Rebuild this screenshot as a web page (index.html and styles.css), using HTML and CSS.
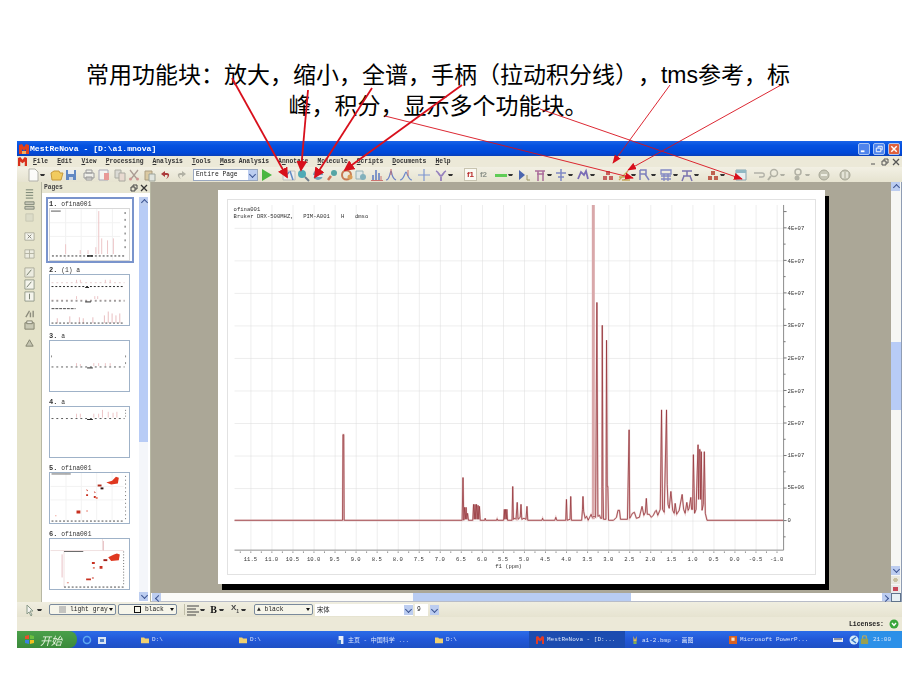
FILE: index.html
```html
<!DOCTYPE html>
<html lang="zh">
<head>
  <meta charset="UTF-8">
  <title>MestReNova 常用功能块</title>
  <link rel="stylesheet" href="styles.css">
</head>
<body>

  <h1 class="heading">常用功能块：放大，缩小，全谱，手柄（拉动积分线），tms参考，标峰，积分，显示多个功能块。</h1>

  <div class="app">
    <div class="titlebar">
      <svg class="logo" viewBox="0 0 12 12"><path d="M1 11V2l3-1 2 3 2-3 3 1v9H8V6L6 8 4 6v5z" fill="#e0401c"/><path d="M4 11V8h4v3z" fill="#f0b060"/></svg>
      <span class="title-text">MestReNova - [D:\a1.mnova]</span>
      <div class="winbtns">
        <span class="winbtn"><svg viewBox="0 0 11 11"><path d="M2 8h4" stroke="#fff" stroke-width="2"/></svg></span>
        <span class="winbtn"><svg viewBox="0 0 11 11"><path d="M2.5 4.5h5v4h-5zM4.5 4V2.5h4.500v4H8" fill="none" stroke="#fff"/></svg></span>
        <span class="winbtn close"><svg viewBox="0 0 11 11"><path d="M2.500 2.500l6 6M8.500 2.500l-6 6" stroke="#fff" stroke-width="1.600"/></svg></span>
      </div>
    </div>

    <div class="menubar">
      <svg class="menu-logo" viewBox="0 0 10 10"><path d="M0 10V1l2.500-1L5 3l2.500-3L10 1v9H7.500V5L5 7 2.500 5v5z" fill="#d8301c"/></svg>
      <div class="menu-items">
        <span><u>F</u>ile</span><span><u>E</u>dit</span><span><u>V</u>iew</span><span><u>P</u>rocessing</span><span><u>A</u>nalysis</span><span><u>T</u>ools</span><span><u>M</u>ass Analysis</span><span>A<u>n</u>notate</span><span><u>M</u>olecule</span><span><u>S</u>cripts</span><span><u>D</u>ocuments</span><span><u>H</u>elp</span>
      </div>
      <div class="mdibtns">
        <svg viewBox="0 0 8 8"><path d="M1 6h4" stroke="#555"/></svg>
        <svg viewBox="0 0 8 8"><path d="M1 3h4v4H1zM3 3V1h4v4H5" fill="none" stroke="#555"/></svg>
        <svg viewBox="0 0 8 8"><path d="M1 1l6 6M7 1L1 7" stroke="#555" stroke-width="1.300"/></svg>
      </div>
    </div>

    <div class="toolbar">
      <svg class="ic" viewBox="0 0 14 14"><path d="M3 1h6l3 3v9H3z" fill="#fff" stroke="#a8a8a0"/></svg><i class="dd"></i>
      <svg class="ic g5" viewBox="0 0 14 14"><path d="M1 5l3-2h5l1 2h3l-2 7H2z" fill="#f3c64a" stroke="#c08c20"/></svg>
      <svg class="ic" viewBox="0 0 14 14"><path d="M2 2h10v10H2z" fill="#4a78c0"/><path d="M4 2h6v4H4z" fill="#e8eef8"/><path d="M5 9h4v3H5z" fill="#c8d4e8"/></svg>
      <svg class="ic g4" viewBox="0 0 14 14"><path d="M4 2h6v3H4zM2 5h10v5H2zM4 9h6v3H4z" fill="#f0f0ec" stroke="#8c8c90"/></svg>
      <svg class="ic g1" viewBox="0 0 14 14"><path d="M2 2h9v10H2z" fill="#f6f6f4" stroke="#9a9ab0"/><path d="M7 5h5v7H7z" fill="#e88c8c"/></svg>
      <svg class="ic g2" viewBox="0 0 14 14"><path d="M2 2h6v8H2z" fill="#d8d8d4" stroke="#a0a098"/><path d="M6 5h6v8H6z" fill="#e8d8d0" stroke="#a0a098"/></svg>
      <svg class="ic" viewBox="0 0 14 14"><path d="M3 2l7 9M11 2l-7 9" stroke="#a09088" stroke-width="1.300"/><circle cx="3.500" cy="11" r="1.500" fill="#c88"/><circle cx="10.500" cy="11" r="1.500" fill="#c88"/></svg>
      <svg class="ic g2" viewBox="0 0 14 14"><path d="M2 3h7v9H2z" fill="#d8c498" stroke="#a09070"/><path d="M6 6h6v7H6z" fill="#dfe4e0" stroke="#909890"/></svg>
      <svg class="ic g2" viewBox="0 0 14 14"><path d="M7 11c4-2 4-6 1-6H6V3L2 6l4 3V7h2c1 0 1 2-1 4z" fill="#a01c20"/></svg>
      <svg class="ic g1" viewBox="0 0 14 14"><path d="M7 11c-4-2-4-6-1-6h2V3l4 3-4 3V7H6c-1 0-1 2 1 4z" fill="#a8a89c"/></svg>
      <div class="combo view-combo g5"><span>Entire Page</span><i class="combo-arrow"></i></div>
      <svg class="ic g2" viewBox="0 0 14 14"><path d="M2 1l10 6-10 6z" fill="#2fae28"/></svg>
      <svg class="ic g8" viewBox="0 0 14 14"><path d="M1 3h12v9H1z" fill="#f0f0f0" stroke="#b8b8b8"/><path d="M8 3l3 9M4 8l3-4" stroke="#4a7ac0" stroke-width="1.500"/></svg>
      <svg class="ic" viewBox="0 0 14 14"><circle cx="6" cy="6" r="4" fill="#34a0b0"/><path d="M9 9l4 4" stroke="#5a6a80" stroke-width="2"/></svg>
      <svg class="ic g1" viewBox="0 0 14 14"><circle cx="7" cy="7" r="5" fill="#5a9ab8"/><path d="M1 8h12" stroke="#e0e8f0" stroke-width="2"/></svg>
      <svg class="ic" viewBox="0 0 14 14"><circle cx="9" cy="5" r="3" fill="#3c9a9c"/><path d="M6 8l-3 4" stroke="#c86040" stroke-width="2.500"/></svg>
      <svg class="ic g1" viewBox="0 0 14 14"><circle cx="6.500" cy="7" r="4.500" fill="none" stroke="#c0683c" stroke-width="2"/><circle cx="10" cy="9" r="2.500" fill="#d89040"/></svg>
      <svg class="ic" viewBox="0 0 14 14"><path d="M2 3h7v8H2z" fill="#dfe8e8" stroke="#88a8b0"/><circle cx="9" cy="9" r="3" fill="#70a8b8"/></svg>
      <svg class="ic g2" viewBox="0 0 14 14"><path d="M3 12V7M6 12V2M9 12V5" stroke="#4468c0" stroke-width="1.500"/><path d="M11 12V8M1 12.500h12" stroke="#c86060"/></svg>
      <svg class="ic" viewBox="0 0 14 14"><path d="M2 12c4 0 4-9 5-9s0 7 5 9" fill="none" stroke="#5870c0" stroke-width="1.200"/><path d="M7 1v6" stroke="#c05050"/></svg>
      <svg class="ic g1" viewBox="0 0 14 14"><path d="M1 12c4 0 5-8 6-8s2 8 6 8" fill="none" stroke="#5878c8" stroke-width="1.200"/><path d="M9 2v6" stroke="#c06060"/></svg>
      <svg class="ic g4" viewBox="0 0 14 14"><path d="M7 1v12M1 7h12" stroke="#6a88d0" stroke-width="1.200"/></svg>
      <svg class="ic g3" viewBox="0 0 14 14"><path d="M2 3c3 1 3 5 5 5s2-4 5-5M7 8v5" fill="none" stroke="#8870b8" stroke-width="1.800"/></svg><i class="dd"></i>
      <span class="fbtn g11 active">f1</span><span class="fbtn">f2</span>
      <svg class="ic g4" viewBox="0 0 14 14"><path d="M1 6h12v3H1z" fill="#48c840"/></svg><i class="dd"></i>
      <svg class="ic g4" viewBox="0 0 14 14"><path d="M2 2v10l6-5z" fill="#3050a8"/><path d="M10 7v5h3" stroke="#908850" fill="none"/></svg>
      <svg class="ic g2" viewBox="0 0 14 14"><path d="M2 3h10M4 6h7M5 3v10M10 3v10" stroke="#a05890" stroke-width="1.500"/></svg><i class="dd"></i>
      <svg class="ic g2" viewBox="0 0 14 14"><path d="M2 5h10M7 1v12M4 9h6" stroke="#6c78c0" stroke-width="1.500"/></svg><i class="dd"></i>
      <svg class="ic g3" viewBox="0 0 14 14"><path d="M2 11l3-7 3 3 2-4 2 8" fill="none" stroke="#6858b0" stroke-width="1.800"/></svg><i class="dd"></i>
      <svg class="ic g6" viewBox="0 0 14 14"><path d="M5 3h4v4H5zM2 8h4v4H2zM8 8h4v4H8z" fill="#c04848"/></svg>
      <svg class="ic g2" viewBox="0 0 14 14"><path d="M2 12l9-9M2 9h8M5 12h8" stroke="#c0a048" stroke-width="1.300"/></svg><i class="dd"></i>
      <svg class="ic g1" viewBox="0 0 14 14"><path d="M3 2v10M3 2h6v4H3M8 6l4 6" fill="none" stroke="#6c70b8" stroke-width="1.500"/></svg><i class="dd"></i>
      <svg class="ic g3" viewBox="0 0 14 14"><path d="M2 2h10v4H2zM2 8h10M2 11h10M5 6v7M9 6v7" fill="none" stroke="#7078c0" stroke-width="1.300"/></svg><i class="dd"></i>
      <svg class="ic g2" viewBox="0 0 14 14"><path d="M2 3h10M7 3v5M3 8h8M4 8l-2 5M10 8l2 5" fill="none" stroke="#6860a8" stroke-width="1.500"/></svg><i class="dd"></i>
      <svg class="ic g7" viewBox="0 0 14 14"><path d="M5 3h4v4H5zM2 8h4v4H2zM8 8h4v4H8z" fill="#b84838"/></svg><i class="dd"></i>
      <svg class="ic g9" viewBox="0 0 14 14"><path d="M2 2h10v10H2z" fill="#e8f0f4" stroke="#7898a8"/><path d="M2 2h10v3H2z" fill="#80b0c0"/></svg>
      <svg class="ic g4" viewBox="0 0 14 14"><path d="M2 5h8c3 0 3 4 0 4H7" fill="none" stroke="#a8a8a0" stroke-width="1.300"/></svg>
      <svg class="ic" viewBox="0 0 14 14"><circle cx="8" cy="5" r="3.500" fill="none" stroke="#a8a89c" stroke-width="1.500"/><path d="M5 8l-3 4" stroke="#a8a89c" stroke-width="2"/></svg><i class="dd dim"></i>
      <svg class="ic g6" viewBox="0 0 14 14"><circle cx="7" cy="4" r="3" fill="none" stroke="#a8a89c" stroke-width="1.500"/><circle cx="6" cy="10" r="2.500" fill="#a8a89c"/></svg><i class="dd dim"></i>
      <svg class="ic g7" viewBox="0 0 14 14"><circle cx="7" cy="7" r="5" fill="#c0c0b0" stroke="#989888"/><path d="M4 6h6v2H4z" fill="#eeeee4"/></svg>
      <svg class="ic g7" viewBox="0 0 14 14"><circle cx="7" cy="7" r="5" fill="#c0c0b0" stroke="#989888"/><path d="M5 4v6M9 4v6" stroke="#eeeee4" stroke-width="1.500"/></svg>
    </div>

    <div class="workspace">
      <div class="strip">
        <svg class="strip-ic" viewBox="0 0 12 12"><path d="M2 2h8M2 5h8M2 8h8M2 11h8" stroke="#6e7c6c"/></svg>
        <svg class="strip-ic" viewBox="0 0 12 12"><path d="M1 2h10v3H1zM1 7h10v3H1z" fill="#c8c8b8" stroke="#808878"/></svg>
        <svg class="strip-ic" viewBox="0 0 12 12"><path d="M2 2h8v8H2z" fill="#dcdcc8" stroke="#c8c8b4"/></svg>
        <svg class="strip-ic gap-big" viewBox="0 0 12 12"><path d="M1 2h10v8H1z" fill="#f4f4ec" stroke="#a8a898"/><path d="M4 4l4 4M8 4l-4 4" stroke="#808078"/></svg>
        <svg class="strip-ic gap-mid" viewBox="0 0 12 12"><path d="M1 2h10v9H1zM1 6h10M6 2v9" fill="#ecece0" stroke="#b0b0a0"/></svg>
        <svg class="strip-ic gap-big" viewBox="0 0 12 12"><path d="M1 1h10v10H1z" fill="#ecece0" stroke="#a8a898"/><path d="M3 9l5-6" stroke="#707868"/></svg>
        <svg class="strip-ic" viewBox="0 0 12 12"><path d="M1 1h10v10H1z" fill="#f4f4ec" stroke="#909888"/><path d="M3 9l5-6" stroke="#707868"/></svg>
        <svg class="strip-ic" viewBox="0 0 12 12"><path d="M1 1h10v10H1z" fill="#f4f4ec" stroke="#909888"/><path d="M6 3v6" stroke="#707868"/></svg>
        <svg class="strip-ic gap-mid" viewBox="0 0 12 12"><path d="M2 10l4-7M7 10V5M10 10V3" stroke="#8c8c7c" stroke-width="1.500"/></svg>
        <svg class="strip-ic" viewBox="0 0 12 12"><path d="M1 3h10v7H1z" fill="#c8c8b4" stroke="#80806c"/><path d="M3 1h6v3H3z" fill="#e8e8dc" stroke="#80806c"/></svg>
        <svg class="strip-ic gap-mid" viewBox="0 0 12 12"><path d="M2 10l4-7 4 7z" fill="#c4c4b0" stroke="#80806c"/></svg>
      </div>

      <div class="pages">
        <div class="pages-head">
          <span>Pages</span>
          <svg viewBox="0 0 8 8"><path d="M1 3h4v4H1zM3 3V1h4v4H5" fill="none" stroke="#444"/></svg>
          <svg viewBox="0 0 8 8"><path d="M1 1l6 6M7 1L1 7" stroke="#333" stroke-width="1.300"/></svg>
        </div>
        <div class="pages-body">
          <div class="page-list">
            <div class="pg selected">
              <div class="pg-label"><b>1.</b> ofina001</div>
              <svg class="thumb tall" viewBox="0 0 81 52"><path d="M16 0v52M32 0v52M48 0v52M64 0v52M0 14h72M0 28h72" stroke="#f2f2f2" fill="none"/><path d="M1 2h10" stroke="#555"/><path d="M16 46V36M31 46v-4M39 46v-4M50 46V2M53 46V30M59 46V32M65 46V30M47 46v-7" stroke="#ecc4c6" fill="none"/><path d="M2 48h76" stroke="#333" stroke-dasharray="2 2"/><path d="M38 48h6" stroke="#222" stroke-width="1.500"/><path d="M77 3v42" stroke="#555" stroke-dasharray="2 5"/></svg>
            </div>
            <div class="pg">
              <div class="pg-label"><b>2.</b> (1) a</div>
              <svg class="thumb" viewBox="0 0 81 52"><path d="M1 8h76M1 26h76" stroke="#e4cccc" stroke-dasharray="2 3"/><path d="M27 8V5M31 8V5M57 8V5M62 8V5M27 25v-3M46 25v-3M49 25v-3" stroke="#ecc4c6"/><path d="M1 12h76" stroke="#222" stroke-dasharray="2 2"/><path d="M1 27h76" stroke="#555" stroke-dasharray="2 3"/><path d="M36 28h6M36 13h4" stroke="#222"/><path d="M1 35h25" stroke="#444" stroke-dasharray="3 1"/><path d="M7 50v-5M20 50v-7M30 50v-6M34 50v-5M44 50v-6M56 50v-8M60 50v-12M64 50v-10M68 50v-8M72 50v-10" stroke="#e8bcbe"/><path d="M1 50h76" stroke="#444" stroke-dasharray="2 2"/></svg>
            </div>
            <div class="pg">
              <div class="pg-label"><b>3.</b> a</div>
              <svg class="thumb" viewBox="0 0 81 52"><path d="M1 27h76" stroke="#555" stroke-dasharray="2 3"/><path d="M38 28h6" stroke="#222"/><path d="M27 26v-3M31 26v-2M45 26v-3M50 26v-3M57 26v-3M62 26v-3" stroke="#ecc4c6"/><path d="M1 15v2M78 15v2M78 22v2" stroke="#888"/></svg>
            </div>
            <div class="pg">
              <div class="pg-label"><b>4.</b> a</div>
              <svg class="thumb" viewBox="0 0 81 52"><path d="M1 12h76" stroke="#555" stroke-dasharray="2 3"/><path d="M38 13h6" stroke="#222"/><path d="M27 11V7M31 11V7M45 11V7M50 11V7M54 11V3M60 11V5M65 11V6M69 11V5" stroke="#ecc4c6"/><path d="M78 3v7" stroke="#777" stroke-dasharray="1 2"/></svg>
            </div>
            <div class="pg">
              <div class="pg-label"><b>5.</b> ofina001</div>
              <svg class="thumb" viewBox="0 0 81 52"><path d="M16 0v50M32 0v50M48 0v50M64 0v50M0 14h76M0 28h76" stroke="#f2f2f2" fill="none"/><path d="M1 1h20" stroke="#666"/><path d="M58 10l6-2 4-4 3 1-1 6-7 1z" fill="#e03820"/><path d="M49 12h4v2h-4z" fill="#b02818"/><path d="M52 15h3v2h-3z" fill="#301010"/><path d="M27 39h4v3h-4zM45 19l2 1-1 1zM45 24h2v2h-2zM37 17l2 1-1 1zM37 22h2v2h-2z" fill="#c83020"/><path d="M37 39h2v1h-2zM5 44h1v1H5zM47 25h2v2h-2z" fill="#e88070"/><path d="M1 50h76" stroke="#444" stroke-dasharray="2 2"/><path d="M78 3v46" stroke="#666" stroke-dasharray="1 3"/></svg>
            </div>
            <div class="pg">
              <div class="pg-label"><b>6.</b> ofina001</div>
              <svg class="thumb" viewBox="0 0 81 52"><path d="M14 12v38M0 12h76M54 0v12" stroke="#f0e0e0" fill="none"/><path d="M55 12V2M12 40V16" stroke="#e8c0c4"/><path d="M14 13h20" stroke="#666"/><path d="M60 19l6-3 3-1 3 1-1 6-8 1z" fill="#e03820"/><path d="M55 21h4v2h-4z" fill="#a02018"/><path d="M43 24h3v2h-3zM51 28h3v3h-3zM37 41h5v2h-5zM43 40h2v1h-2z" fill="#c83020"/><path d="M44 29h2v2h-2zM17 45h2v1h-2z" fill="#e08878"/><path d="M14 50h64" stroke="#444" stroke-dasharray="2 2"/><path d="M76 13v36" stroke="#666" stroke-dasharray="1 2"/></svg>
            </div>
          </div>
          <div class="side-scroll">
            <i class="sbtn up"></i>
            <i class="side-thumb"></i>
            <i class="side-track"></i>
            <i class="sbtn down"></i>
          </div>
        </div>
      </div>

      <div class="viewer">
        <div class="canvas">
          <div class="page-sheet">
            <div class="plot-frame">
              <svg class="plot" viewBox="227 199 589 376">
                <defs>
                  <pattern id="grid" patternUnits="userSpaceOnUse" x="249" y="227" width="21.160" height="32.700">
                    <path d="M0 0V32.700M0 0H21.160" stroke="#dcdcdc" fill="none"/>
                  </pattern>
                  <path id="spectrum" d="M233 521H341.600L342 435L342.800 435L343.200 521H461.800L462.700 478L463.500 521L464.300 508L465 520L465.800 508L466.500 520L467.300 514L468.200 521H472.500L473.300 505L474 520L474.800 505L475.500 520L476.300 505L477 520L477.800 506L478.500 520L479.200 507L480 521H484.500L485 519L485.500 521H496.500L497 519.500L497.500 521H503.500L504.200 510L504.800 520L505.500 510L506.200 520L506.800 510L507.500 521H512L512.700 487L513.400 520L515 519L516 520L517.200 503L518 520L520.200 518L521 505L521.800 520L524 519L526 520L527 507L527.800 521H542L542.700 519L543.400 521H555L556 518L557 521H566L566.700 500L567.400 521L570.300 520L571 497L571.700 521H582L582.800 510L583.300 497L584 512L585.500 519L587 517L588.500 521L590 518L591.500 515L592.500 518L594.500 517L596 518L597.300 302L598.300 517L600 516L601 519L602.300 519L602.700 325L603.400 487L604 520L606.400 520L607 340L607.700 487L608.300 487L609 521H614L617 518L618.500 511L620 511L621 520L628 520L629.700 430L630.300 519L632 516L633 514L635 513L637 519L640 518L642.700 507L644.500 516L646 513L647 499L648 515L650 515L652 518L654 516L656 512L657 511L658.500 516L661 510L662.300 410L663.300 510L665 513L667.300 410L668 485L668.800 505L670 509L671.700 492L673.500 511L675 514L676 504L677.500 515L680 511L683 495L684.500 510L686 514L687.700 503L689 511L690 509L691.700 498L692.500 510L693.500 510L694.300 455L695.500 514L697 510L699 445L699.600 500L700.300 450L701 450L701.600 500L702.300 452L703 511L704.300 505L705.300 452L706.300 514L708 521H785"/>
                </defs>
                <rect x="233" y="204" width="552" height="347" fill="url(#grid)"/>
                <text class="plot-text" x="232" y="210">ofina001</text>
                <text class="plot-text" x="232" y="217">Bruker DRX-500MHZ,<tspan x="302">PIM-A001</tspan><tspan x="340">H</tspan><tspan x="354">dmso</tspan></text>

                <path d="M593.700 204V520" stroke="#d9a8aa" stroke-width="3"/>
                <use href="#spectrum" class="spectrum-halo"/>
                <use href="#spectrum" class="spectrum-core"/>

                <path d="M233 551H785M785 204V551" stroke="#8c8c8c" fill="none"/>
                <path d="M233 553H785" stroke="#555" stroke-dasharray="1 9.580" stroke-dashoffset="-5.300"/>
                <path d="M785 210.650H788M785 227H788M785 243.350H787M785 259.700H788M785 276.050H787M785 292.400H788M785 308.750H787M785 325.100H788M785 341.450H787M785 357.800H788M785 374.150H787M785 390.500H788M785 406.850H787M785 423.200H788M785 439.550H787M785 455.900H788M785 472.250H787M785 488.600H788M785 504.950H787M785 521.300H788M785 537.650H787" stroke="#777"/>

                <text class="plot-text" x="789" y="229">4E+07</text>
                <text class="plot-text" x="789" y="262">4E+07</text>
                <text class="plot-text" x="789" y="295">4E+07</text>
                <text class="plot-text" x="789" y="327">3E+07</text>
                <text class="plot-text" x="789" y="360">2E+07</text>
                <text class="plot-text" x="789" y="393">2E+07</text>
                <text class="plot-text" x="789" y="425">2E+07</text>
                <text class="plot-text" x="789" y="457">1E+07</text>
                <text class="plot-text" x="789" y="490">5E+06</text>
                <text class="plot-text" x="789" y="523">0</text>

                <g class="x-labels">
                  <text x="249" y="562">11.5</text><text x="270.200" y="562">11.0</text><text x="291.300" y="562">10.5</text><text x="312.500" y="562">10.0</text><text x="333.600" y="562">9.5</text><text x="354.800" y="562">9.0</text><text x="376" y="562">8.5</text><text x="397.100" y="562">8.0</text><text x="418.300" y="562">7.5</text><text x="439.400" y="562">7.0</text><text x="460.600" y="562">6.5</text><text x="481.800" y="562">6.0</text><text x="502.900" y="562">5.5</text><text x="524.100" y="562">5.0</text><text x="545.200" y="562">4.5</text><text x="566.400" y="562">4.0</text><text x="587.600" y="562">3.5</text><text x="608.700" y="562">3.0</text><text x="629.900" y="562">2.5</text><text x="651" y="562">2.0</text><text x="672.200" y="562">1.5</text><text x="693.400" y="562">1.0</text><text x="714.500" y="562">0.5</text><text x="735.700" y="562">0.0</text><text x="756.800" y="562">-0.5</text><text x="778" y="562">-1.0</text>
                </g>
                <text class="plot-text" x="495" y="569">f1 (ppm)</text>
              </svg>
            </div>
          </div>
        </div>
        <div class="hscroll">
          <i class="sbtn left"></i>
          <i class="h-track"></i>
          <i class="h-thumb"></i>
          <i class="h-rest"></i>
          <i class="sbtn right"></i>
        </div>
      </div>

      <div class="vscroll">
        <i class="sbtn up"></i>
        <i class="v-track top"></i>
        <i class="v-thumb"></i>
        <i class="v-track bottom"></i>
        <i class="sbtn down"></i>
        <i class="v-mini dot"></i>
        <i class="v-mini pink"></i>
        <i class="v-corner"></i>
      </div>
    </div>

    <div class="formatbar">
      <svg class="ic" viewBox="0 0 14 14"><path d="M4 2v9l2-2 2 4 1-1-2-4h3z" fill="#f4f4f0" stroke="#8a9a88"/></svg><i class="dd"></i>
      <div class="combo fmt-combo fill-combo"><i class="swatch gray"></i><span>light gray</span><i class="caret"></i></div>
      <div class="combo fmt-combo line-combo"><i class="swatch box"></i><span>black</span><i class="caret"></i></div>
      <i class="sep"></i>
      <svg class="ic" viewBox="0 0 14 14"><path d="M1 3h12M1 6h9M1 9h12M1 12h9" stroke="#444" stroke-width="1.200"/></svg><i class="dd"></i>
      <b class="bold-btn">B</b><i class="dd"></i>
      <span class="sub-btn">X<sub>1</sub></span><i class="dd"></i>
      <div class="combo fmt-combo text-combo"><span>&#9650; black</span><i class="caret"></i></div>
      <div class="combo font-combo"><span>宋体</span><i class="combo-arrow"></i></div>
      <div class="combo size-combo"><span>9</span></div>
      <i class="combo-arrow solo"></i>
    </div>

    <div class="statusbar">
      <span>Licenses:</span>
      <svg viewBox="0 0 10 10"><circle cx="5" cy="5" r="4.500" fill="#3aa63a"/><path d="M3 4l2 2.500L7 4" fill="none" stroke="#fff" stroke-width="1.400"/></svg>
    </div>

    <div class="taskbar">
      <div class="start">
        <svg viewBox="0 0 10 10"><path d="M0 1l4-1v4H0z" fill="#e8502c"/><path d="M5 0l4 1v3H5z" fill="#6cc040"/><path d="M0 5h4v4l-4-1z" fill="#3c80e0"/><path d="M5 5h4v3l-4 1z" fill="#f0c020"/></svg>
        <span>开始</span>
      </div>
      <div class="quick">
        <svg viewBox="0 0 10 10"><circle cx="5" cy="5" r="3.500" fill="none" stroke="#5ea8f0" stroke-width="1.500"/></svg>
        <svg viewBox="0 0 10 10"><path d="M1 2h8v7H1z" fill="#d8e4f4"/><path d="M3 4h4v3H3z" fill="#5080c8"/></svg>
      </div>
      <div class="task"><svg viewBox="0 0 10 10"><path d="M0 2h4l1 1h5v6H0z" fill="#f0d070"/></svg>D:\</div>
      <div class="task"><svg viewBox="0 0 10 10"><path d="M0 2h4l1 1h5v6H0z" fill="#f0d070"/></svg>D:\</div>
      <div class="task"><svg viewBox="0 0 10 10"><path d="M2 0h6v10H2z" fill="#e8eef8"/><path d="M0 5h5v5H0z" fill="#3878c8"/></svg>主页 - 中国科学 ...</div>
      <div class="task"><svg viewBox="0 0 10 10"><path d="M0 2h4l1 1h5v6H0z" fill="#f0d070"/></svg>D:\</div>
      <div class="task current"><svg viewBox="0 0 10 10"><path d="M0 10V1l2.500-1L5 3l2.500-3L10 1v9H7.500V5L5 7 2.500 5v5z" fill="#e03c28"/></svg>MestReNova - [D:...</div>
      <div class="task"><svg viewBox="0 0 10 10"><path d="M3 0l2 5 2-5v7H3z" fill="#e8c048"/><path d="M3 7h4v3H3z" fill="#80b050"/></svg>a1-2.bmp - 画图</div>
      <div class="task"><svg viewBox="0 0 10 10"><path d="M0 0h10v10H0z" fill="#d86020"/><path d="M3 2h4v4H3z" fill="#f4e0c8"/></svg>Microsoft PowerP...</div>
      <div class="tray">
        <svg class="tray-kbd" viewBox="0 0 10 10"><path d="M0 3h10v4H0z" fill="#e4e8f0"/><path d="M1 4h8" stroke="#445"/></svg>
        <svg class="tray-ic" viewBox="0 0 10 10"><circle cx="5" cy="5" r="4.500" fill="#d8ecf8"/><path d="M7 2L3 5l4 3" stroke="#3878c8" fill="none" stroke-width="1.500"/></svg>
        <div class="tray-inner">
          <svg viewBox="0 0 10 10"><path d="M1 4h8v6H1z" fill="#98a050"/><path d="M3 4V1h4v3" fill="none" stroke="#d8b040"/></svg>
          <span>21:00</span>
        </div>
      </div>
    </div>
  </div>

  <svg class="arrows" viewBox="0 0 920 690">
    <defs>
      <marker id="head" markerWidth="6" markerHeight="6" refX="5" refY="3" orient="auto"><path d="M0 0L6 3L0 6z" fill="#d8101c"/></marker>
      <marker id="head-thin" markerWidth="10" markerHeight="8" refX="9" refY="4" orient="auto"><path d="M0 0L10 4L0 8z" fill="#d8101c"/></marker>
    </defs>
    <g class="arrow-thick">
      <path d="M232 78L287 177" marker-end="url(#head)"/>
      <path d="M308 90L301 170" marker-end="url(#head)"/>
      <path d="M372 88L315 177" marker-end="url(#head)"/>
      <path d="M462 85L345 170" marker-end="url(#head)"/>
    </g>
    <g class="arrow-thin">
      <path d="M385 116L633 178" marker-end="url(#head-thin)"/>
      <path d="M540 109L742 179" marker-end="url(#head-thin)"/>
      <path d="M670 85L613 163" marker-end="url(#head-thin)"/>
      <path d="M781 85L628 170" marker-end="url(#head-thin)"/>
    </g>
  </svg>

</body>
</html>
```

FILE: styles.css
```css
* {
  box-sizing: border-box;
}
body {
  margin: 0;
  width: 920px;
  height: 690px;
  background: #fff;
  position: relative;
  overflow: hidden;
  font-family: "Liberation Mono", "Noto Sans CJK SC", monospace;
}
i {
  display: block;
}
.heading {
  width: 720px;
  margin: 0 0 0 78px;
  padding: 60px 0 19px;
  font-family: "Liberation Sans", "Noto Sans CJK SC", sans-serif;
  font-size: 23px;
  font-weight: normal;
  line-height: 31px;
  text-align: center;
  text-spacing-trim: space-all;
  color: #000;
}
.app {
  width: 885px;
  margin-left: 17px;
  height: 507px;
  font-size: 6.3px;
  color: #222;
  background: #ece9d8;
  filter: blur(0.35px);
}

/* title bar */
.titlebar {
  height: 15px;
  display: flex;
  align-items: center;
  padding-left: 1px;
  background: linear-gradient(#1a64e8, #0552e0 30%, #0048d8 80%, #0a40b8);
  color: #fff;
}
.logo {
  width: 12px;
  height: 12px;
}
.title-text {
  font-size: 8.100px;
  font-weight: bold;
}
.winbtns {
  margin-left: auto;
  display: flex;
  gap: 3px;
  padding-right: 2px;
}
.winbtn {
  width: 12px;
  height: 12px;
  border-radius: 2px;
  background: #4f84ec;
  border: 1px solid #a8c4f4;
}
.winbtn svg {
  display: block;
  width: 10px;
  height: 10px;
}
.winbtn.close {
  background: #e0603c;
}

/* menu */
.menubar {
  height: 11px;
  display: flex;
  align-items: center;
  padding-left: 1px;
  font-weight: bold;
  color: #333;
}
.menu-logo {
  width: 9px;
  height: 9px;
}
.menu-items {
  display: flex;
  gap: 9.100px;
  margin-left: 6px;
}
.mdibtns {
  margin-left: auto;
  display: flex;
  gap: 3px;
  padding-right: 2px;
}
.mdibtns svg {
  width: 8px;
  height: 8px;
}

/* toolbars */
.toolbar {
  height: 15px;
  display: flex;
  align-items: center;
  padding-left: 9px;
  background: linear-gradient(#f2f0e4, #e6e3d0);
}
.toolbar .ic {
  opacity: 0.85;
}
.ic {
  width: 14px;
  height: 14px;
  flex: none;
}
.dd {
  flex: none;
  width: 5px;
  height: 2px;
  border-top: 2px solid #333;
  border-left: 1px solid transparent;
  border-right: 1px solid transparent;
}
.dd.dim {
  border-top-color: #b0b0a4;
}
.g1 { margin-left: 1px; }
.g2 { margin-left: 2px; }
.g3 { margin-left: 3px; }
.g4 { margin-left: 4px; }
.g5 { margin-left: 5px; }
.g6 { margin-left: 6px; }
.g7 { margin-left: 7px; }
.g8 { margin-left: 8px; }
.g9 { margin-left: 9px; }
.g11 { margin-left: 11px; }
.combo {
  flex: none;
  display: flex;
  align-items: center;
  background: #fff;
  border: 1px solid #9aa8c0;
  height: 12px;
  padding-left: 2px;
  white-space: nowrap;
}
.view-combo {
  width: 65px;
}
.combo-arrow {
  margin-left: auto;
  width: 9px;
  height: 10px;
  background: #bccdf0;
  position: relative;
}
.combo-arrow::after {
  content: "";
  position: absolute;
  left: 2px;
  top: 2px;
  width: 4px;
  height: 4px;
  border-right: 1.500px solid #3c5490;
  border-bottom: 1.500px solid #3c5490;
  transform: rotate(45deg);
}
.combo-arrow.solo {
  margin-left: 2px;
  flex: none;
}
.fbtn {
  flex: none;
  width: 13px;
  height: 13px;
  font: bold 8px/13px "Liberation Sans", sans-serif;
  text-align: center;
  color: #8a9088;
}
.fbtn.active {
  color: #b82828;
  background: #fbfaf4;
  border: 1px solid #c8c4b0;
  line-height: 11px;
}

/* workspace */
.workspace {
  height: 420px;
  display: flex;
  background: #e5e3ca;
}
.strip {
  width: 24px;
  flex: none;
  display: flex;
  flex-direction: column;
  align-items: center;
  padding-top: 6px;
  gap: 1px;
}
.strip-ic {
  width: 11px;
  height: 11px;
  flex: none;
}
.strip-ic.gap-big {
  margin-top: 7px;
}
.strip-ic.gap-mid {
  margin-top: 5px;
}
.pages {
  width: 110px;
  flex: none;
  display: flex;
  flex-direction: column;
  border-left: 1px solid #b8b8a4;
  border-right: 1px solid #b8b8a4;
  background: #fff;
}
.pages-head {
  height: 11px;
  flex: none;
  display: flex;
  align-items: center;
  gap: 2px;
  padding: 0 2px;
  background: #e8e6d2;
}
.pages-head span {
  margin-right: auto;
  font-weight: bold;
  color: #444;
}
.pages-head svg {
  width: 8px;
  height: 8px;
}
.pages-body {
  flex: 1;
  display: flex;
  padding: 4px 2px 1px 4px;
  min-height: 0;
}
.page-list {
  width: 88px;
  flex: none;
}
.pg {
  height: 66px;
  padding: 1px;
  border: 2px solid transparent;
  display: flex;
  flex-direction: column;
}
.pg.selected {
  border-color: #7a94cc;
}
.pg-label {
  height: 8px;
  line-height: 8px;
  color: #333;
}
.pg-label b {
  font-size: 7px;
}
.thumb {
  display: block;
  width: 81px;
  height: 52px;
  border: 1px solid #9fb2c8;
  background: #fff;
  flex: none;
}
.thumb.tall {
  height: 53px;
  border-color: #d8d8d8;
}
.side-scroll {
  width: 9px;
  margin-left: 5px;
  flex: none;
  display: flex;
  flex-direction: column;
  background: #f4f6fa;
}
.sbtn {
  flex: none;
  height: 9px;
  width: 9px;
  background: #bccdf0;
  position: relative;
}
.sbtn::after {
  content: "";
  position: absolute;
  left: 2.500px;
  top: 3px;
  width: 4px;
  height: 4px;
  border-left: 1.500px solid #3c5490;
  border-top: 1.500px solid #3c5490;
  transform: rotate(45deg);
}
.sbtn.down::after {
  top: 1px;
  transform: rotate(225deg);
}
.sbtn.left::after {
  left: 3.500px;
  top: 2.500px;
  transform: rotate(-45deg);
}
.sbtn.right::after {
  left: 1px;
  top: 2.500px;
  transform: rotate(135deg);
}
.side-thumb {
  height: 236px;
  flex: none;
  background: #b8ccf6;
}
.side-track {
  flex: 1;
}

/* main view */
.viewer {
  flex: 1;
  min-width: 0;
  display: flex;
  flex-direction: column;
}
.canvas {
  height: 411px;
  background: #aba797;
  padding: 8px 0 0 67px;
}
.page-sheet {
  width: 607px;
  height: 394px;
  padding: 9px;
  background: #fff;
  box-shadow: 4px 6px 0 #000;
}
.plot-frame {
  width: 589px;
  height: 376px;
  border: 1px solid #e2e2e2;
}
.plot {
  display: block;
  width: 587px;
  height: 374px;
  overflow: visible;
}
.plot-text {
  font-size: 5.600px;
  fill: #333;
}
.x-labels {
  font-size: 5.600px;
  fill: #333;
  text-anchor: middle;
}
.spectrum-halo {
  fill: none;
  stroke: #e8caca;
  stroke-width: 1.800px;
}
.spectrum-core {
  fill: none;
  stroke: #96363c;
  stroke-width: 0.800px;
}
.hscroll {
  height: 9px;
  display: flex;
  background: #fff;
  border-bottom: 1px solid #b8bcc8;
}
.hscroll .sbtn {
  height: 8px;
}
.hscroll .sbtn.left {
  margin-left: 1px;
}
.h-track {
  width: 252px;
  flex: none;
  background: #fbfbf8;
}
.h-thumb {
  width: 218px;
  flex: none;
  height: 8px;
  background: #b8ccf2;
}
.h-rest {
  flex: 1;
}
.vscroll {
  width: 11px;
  flex: none;
  display: flex;
  flex-direction: column;
  border-right: 1px solid #8f9db4;
  background: #f6f7f4;
}
.v-track.top {
  height: 151px;
  flex: none;
}
.v-track.bottom {
  height: 156px;
  flex: none;
}
.v-thumb {
  height: 68px;
  flex: none;
  background: #b8ccf6;
}
.v-mini {
  height: 8px;
  width: 9px;
  flex: none;
  margin-top: 1px;
}
.v-mini.dot {
  background: radial-gradient(circle, #c8c0a0 2px, #e8e8e0 2.500px);
}
.v-mini.pink {
  background: linear-gradient(#c84858, #c84858) center / 5px 4px no-repeat #e8e8e8;
}
.v-corner {
  height: 9px;
  width: 10px;
  flex: none;
  border: 1px solid #60748c;
  background: #e8f0f4;
}

/* bottom bars */
.formatbar {
  height: 15px;
  display: flex;
  align-items: center;
  padding-left: 6px;
  background: linear-gradient(#f0eee0, #e6e3d0);
}
.fmt-combo {
  height: 11px;
  border: 1px solid #7a8a9c;
  border-radius: 2px;
  background: #f6f5ea;
}
.fill-combo {
  width: 67px;
  margin-left: 7px;
}
.line-combo {
  width: 59px;
  margin-left: 2px;
}
.text-combo {
  width: 59px;
  margin-left: 8px;
  justify-content: center;
}
.swatch {
  width: 7px;
  height: 7px;
  margin: 0 4px 0 7px;
  flex: none;
}
.swatch.gray {
  background: #c4c4c0;
}
.swatch.box {
  border: 1.500px solid #111;
  margin-left: 13px;
}
.caret {
  margin-left: auto;
  margin-right: 2px;
  border-top: 3px solid #111;
  border-left: 2px solid transparent;
  border-right: 2px solid transparent;
}
.sep {
  width: 1px;
  height: 11px;
  margin: 0 1px 0 7px;
  background: #c0bea8;
}
.bold-btn {
  width: 11px;
  margin-left: 3px;
  font: bold 10px/12px "Liberation Serif", serif;
  color: #111;
  text-align: center;
}
.sub-btn {
  width: 12px;
  margin-left: 5px;
  font: bold 8px/12px "Liberation Sans", sans-serif;
  color: #444;
  text-align: center;
}
.sub-btn sub {
  font-size: 5px;
}
.font-combo {
  width: 98px;
  margin-left: 2px;
  border: 0;
}
.size-combo {
  width: 13px;
  margin-left: 2px;
  border: 0;
}
.statusbar {
  height: 14px;
  display: flex;
  align-items: center;
  justify-content: flex-end;
  gap: 5px;
  padding-right: 3px;
  font-weight: bold;
  font-size: 6.500px;
  color: #222;
}
.statusbar svg {
  width: 10px;
  height: 10px;
}

/* taskbar */
.taskbar {
  height: 17px;
  display: flex;
  align-items: stretch;
  background: linear-gradient(#2c6ce8, #2258d8 50%, #1e50c4);
  color: #dbe6fa;
  font-size: 6px;
}
.start {
  width: 60px;
  flex: none;
  display: flex;
  align-items: center;
  gap: 5px;
  padding-left: 8px;
  background: linear-gradient(#4aa04a, #3a8a3a);
  border-radius: 0 8px 8px 0;
  color: #e8f4e0;
  font: italic 11px "Noto Sans CJK SC", sans-serif;
}
.start svg {
  width: 10px;
  height: 10px;
}
.quick {
  width: 60px;
  flex: none;
  display: flex;
  align-items: center;
  gap: 5px;
  padding-left: 5px;
}
.quick svg {
  width: 10px;
  height: 10px;
}
.task {
  width: 96px;
  margin-right: 2px;
  flex: none;
  display: flex;
  align-items: center;
  gap: 3px;
  padding-left: 4px;
  white-space: nowrap;
  overflow: hidden;
}
.task svg {
  width: 8px;
  height: 8px;
  flex: none;
}
.task.current {
  background: #1c4cb0;
  padding-left: 7px;
}
.tray {
  flex: 1;
  display: flex;
  align-items: center;
  padding-left: 10px;
}
.tray-kbd {
  width: 10px;
  height: 10px;
}
.tray-ic {
  width: 10px;
  height: 10px;
  margin-left: 6px;
}
.tray-inner {
  flex: 1;
  align-self: stretch;
  display: flex;
  align-items: center;
  gap: 4px;
  padding-left: 1px;
  background: #2c90e8;
}
.tray-inner svg {
  width: 9px;
  height: 9px;
}

/* arrows over the screenshot */
.arrows {
  position: absolute;
  left: 0;
  top: 0;
  width: 920px;
  height: 690px;
  pointer-events: none;
}
.arrow-thick path {
  fill: none;
  stroke: #d8101c;
  stroke-width: 1.800px;
}
.arrow-thin path {
  fill: none;
  stroke: #d8101c;
  stroke-width: 0.900px;
}
```
